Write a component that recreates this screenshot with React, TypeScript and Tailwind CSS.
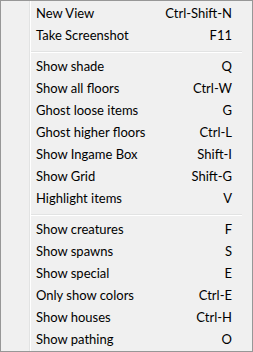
import React from 'react';

type Item = { label: string; key: string };

const groups: Item[][] = [
  [
    { label: 'New View', key: 'Ctrl-Shift-N' },
    { label: 'Take Screenshot', key: 'F11' },
  ],
  [
    { label: 'Show shade', key: 'Q' },
    { label: 'Show all floors', key: 'Ctrl-W' },
    { label: 'Ghost loose items', key: 'G' },
    { label: 'Ghost higher floors', key: 'Ctrl-L' },
    { label: 'Show Ingame Box', key: 'Shift-I' },
    { label: 'Show Grid', key: 'Shift-G' },
    { label: 'Highlight items', key: 'V' },
  ],
  [
    { label: 'Show creatures', key: 'F' },
    { label: 'Show spawns', key: 'S' },
    { label: 'Show special', key: 'E' },
    { label: 'Only show colors', key: 'Ctrl-E' },
    { label: 'Show houses', key: 'Ctrl-H' },
    { label: 'Show pathing', key: 'O' },
  ],
];

export default function App() {
  return (
    <div
      className="w-[253px] h-[352px] bg-[#f0f0f0] border border-[#979797] text-[13px] text-black relative"
      style={{ fontFamily: 'Lato, "Noto Sans", sans-serif' }}
    >
      {/* gutter line */}
      <div className="absolute left-[28px] top-0 bottom-0 w-[2px] border-l border-[#e2e3e3] bg-white" />
      <div className="pt-[2px]">
        {groups.map((g, gi) => (
          <div key={gi}>
            {gi > 0 && (
              <div className="h-[9px] flex items-center pl-[30px] pr-[10px]">
                <div className="w-full h-[2px] border-t border-[#e2e3e3] bg-white" />
              </div>
            )}
            {g.map((it) => (
              <div key={it.label} className="h-[22px] flex items-center justify-between pl-[35px] pr-[20px]">
                <span>{it.label}</span>
                <span>{it.key}</span>
              </div>
            ))}
          </div>
        ))}
      </div>
    </div>
  );
}
